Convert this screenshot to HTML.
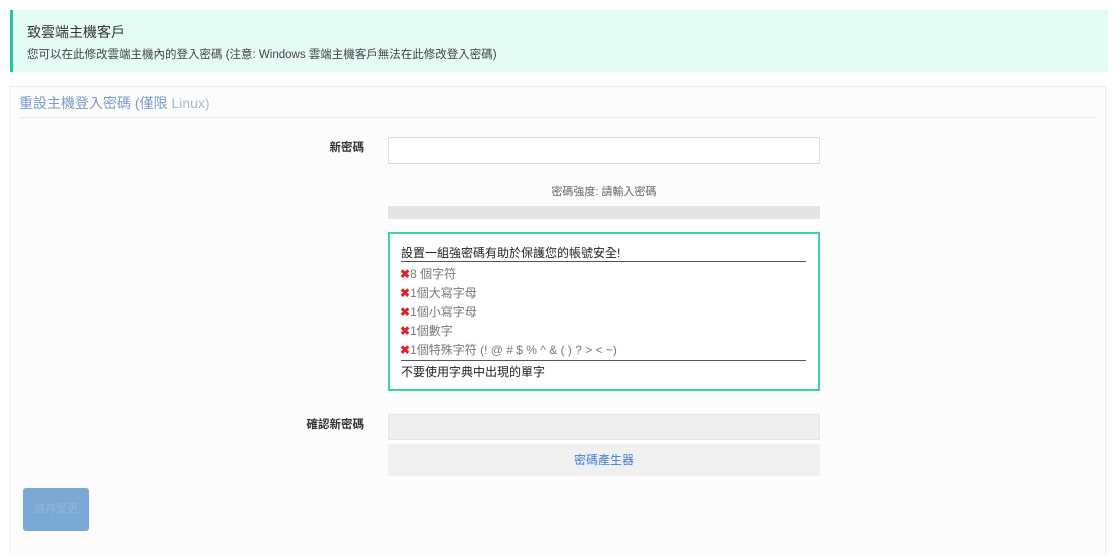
<!DOCTYPE html>
<html><head><meta charset="utf-8"><style>
*{box-sizing:border-box;margin:0;padding:0}
body{width:1118px;height:556px;background:#fff;font-family:"Liberation Sans","Noto Sans CJK TC",sans-serif;color:#333;position:relative;overflow:hidden}
.alert{position:absolute;left:10px;top:10px;width:1098px;height:62px;background:#e5fbf5;border-left:3px solid #1fc99b}
.alert .t{position:absolute;left:14px;top:12px;font-size:14px;color:#333}
.alert .s{position:absolute;left:14px;top:36px;font-size:11.5px;color:#444}
.panel{position:absolute;left:10px;top:86px;width:1096px;height:470px;background:#fcfcfd;border:1px solid #eee;border-bottom:none}
.ptitle{position:absolute;left:8px;top:6px;font-size:14px;color:#7a9cc6}
.ptitle span{color:#aab8c8}
.line{position:absolute;left:9px;right:9px;top:30px;border-top:1px dotted #ddd}
.lbl{position:absolute;font-size:11.5px;font-weight:bold;color:#333;text-align:right;width:100px}
.abs{position:absolute}
</style></head><body>
<div class="alert"><div class="t">致雲端主機客戶</div><div class="s">您可以在此修改雲端主機內的登入密碼 (注意: Windows 雲端主機客戶無法在此修改登入密碼)</div></div>
<div class="panel">
<div class="ptitle">重設主機登入密碼 (僅限 <span>Linux)</span></div>
<div class="line"></div>
</div>
<div class="lbl" style="left:264px;top:139px">新密碼</div>
<div class="abs" style="left:388px;top:137px;width:432px;height:27px;background:#fff;border:1px solid #ddd"></div>
<div class="abs" style="left:388px;top:183px;width:432px;text-align:center;font-size:11px;color:#666">密碼強度: 請輸入密碼</div>
<div class="abs" style="left:388px;top:206px;width:432px;height:13px;background:#e4e4e4"></div>
<div class="abs" style="left:388px;top:232px;width:432px;height:159px;background:#fff;border:2px solid #3ad3ad"></div>
<div class="abs" style="left:401px;top:244px;width:405px;font-size:12px;color:#222;border-bottom:1px solid #555;height:18px">設置一組強密碼有助於保護您的帳號安全!</div>
<div class="abs" style="left:400px;top:265px;font-size:12px;color:#777;line-height:19px">
<div><span style="color:#d9242b;font-weight:bold">✖</span>8 個字符</div>
<div><span style="color:#d9242b;font-weight:bold">✖</span>1個大寫字母</div>
<div><span style="color:#d9242b;font-weight:bold">✖</span>1個小寫字母</div>
<div><span style="color:#d9242b;font-weight:bold">✖</span>1個數字</div>
<div><span style="color:#d9242b;font-weight:bold">✖</span>1個特殊字符 (! @ # $ % ^ &amp; ( ) ? &gt; &lt; ~)</div>
</div>
<div class="abs" style="left:401px;top:360px;width:405px;border-top:1px solid #555"></div>
<div class="abs" style="left:401px;top:363px;font-size:12px;color:#222">不要使用字典中出現的單字</div>
<div class="lbl" style="left:264px;top:416px">確認新密碼</div>
<div class="abs" style="left:388px;top:414px;width:432px;height:26px;background:#eee;border:1px solid #e4e4e4"></div>
<div class="abs" style="left:388px;top:444px;width:432px;height:32px;background:#f0f0f1;text-align:center;line-height:32px;font-size:12px;color:#3e7fcf">密碼產生器</div>
<div class="abs" style="left:23px;top:488px;width:66px;height:43px;background:#7aa9d4;border-radius:3px;text-align:center;line-height:43px;font-size:11px;color:#8fb8de">儲存變更</div>
</body></html>
